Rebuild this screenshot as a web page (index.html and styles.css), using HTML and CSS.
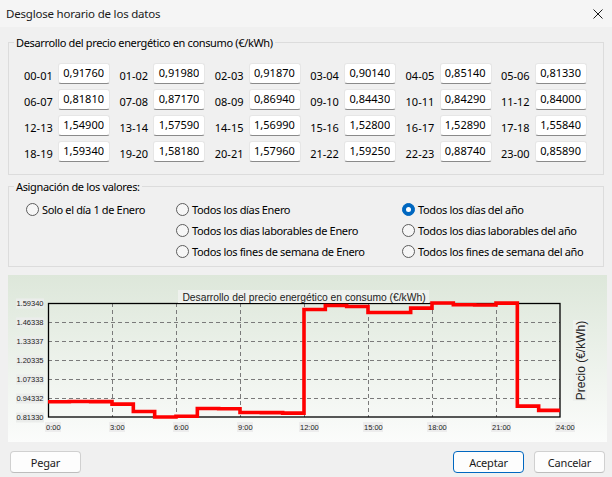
FILE: index.html
```html
<!DOCTYPE html>
<html lang="es">
<head>
    <meta charset="UTF-8">
    <title>Desglose horario de los datos</title>
    <link rel="stylesheet" href="styles.css">
</head>
<body>
    <div class="titlebar">
        <span class="title">Desglose horario de los datos</span>
        <svg class="close" width="10" height="10" viewBox="0 0 10 10">
            <path d="M0.5 0.5 L9.5 9.5 M9.5 0.5 L0.5 9.5" stroke="#1a1a1a" stroke-width="1" fill="none"/>
        </svg>
    </div>

    <div class="content">
        <fieldset class="group">
            <legend>Desarrollo del precio energético en consumo (€/kWh)</legend>
            <div class="price-grid">
                <div class="cell"><span class="hour">00-01</span><input class="val" value="0,91760" readonly></div>
                <div class="cell"><span class="hour">01-02</span><input class="val" value="0,91980" readonly></div>
                <div class="cell"><span class="hour">02-03</span><input class="val" value="0,91870" readonly></div>
                <div class="cell"><span class="hour">03-04</span><input class="val" value="0,90140" readonly></div>
                <div class="cell"><span class="hour">04-05</span><input class="val" value="0,85140" readonly></div>
                <div class="cell"><span class="hour">05-06</span><input class="val" value="0,81330" readonly></div>

                <div class="cell"><span class="hour">06-07</span><input class="val" value="0,81810" readonly></div>
                <div class="cell"><span class="hour">07-08</span><input class="val" value="0,87170" readonly></div>
                <div class="cell"><span class="hour">08-09</span><input class="val" value="0,86940" readonly></div>
                <div class="cell"><span class="hour">09-10</span><input class="val" value="0,84430" readonly></div>
                <div class="cell"><span class="hour">10-11</span><input class="val" value="0,84290" readonly></div>
                <div class="cell"><span class="hour">11-12</span><input class="val" value="0,84000" readonly></div>

                <div class="cell"><span class="hour">12-13</span><input class="val" value="1,54900" readonly></div>
                <div class="cell"><span class="hour">13-14</span><input class="val" value="1,57590" readonly></div>
                <div class="cell"><span class="hour">14-15</span><input class="val" value="1,56990" readonly></div>
                <div class="cell"><span class="hour">15-16</span><input class="val" value="1,52800" readonly></div>
                <div class="cell"><span class="hour">16-17</span><input class="val" value="1,52890" readonly></div>
                <div class="cell"><span class="hour">17-18</span><input class="val" value="1,55840" readonly></div>

                <div class="cell"><span class="hour">18-19</span><input class="val" value="1,59340" readonly></div>
                <div class="cell"><span class="hour">19-20</span><input class="val" value="1,58180" readonly></div>
                <div class="cell"><span class="hour">20-21</span><input class="val" value="1,57960" readonly></div>
                <div class="cell"><span class="hour">21-22</span><input class="val" value="1,59250" readonly></div>
                <div class="cell"><span class="hour">22-23</span><input class="val" value="0,88740" readonly></div>
                <div class="cell"><span class="hour">23-00</span><input class="val" value="0,85890" readonly></div>
            </div>
        </fieldset>

        <fieldset class="group assign">
            <legend>Asignación de los valores:</legend>
            <div class="radio-grid">
                <div class="radio"><span class="dot"></span>Solo el día 1 de Enero</div>
                <div class="radio"><span class="dot"></span>Todos los días Enero</div>
                <div class="radio"><span class="dot on"></span>Todos los días del año</div>
                <div class="blank"></div>
                <div class="radio"><span class="dot"></span>Todos los dias laborables de Enero</div>
                <div class="radio"><span class="dot"></span>Todos los dias laborables del año</div>
                <div class="blank"></div>
                <div class="radio"><span class="dot"></span>Todos los fines de semana de Enero</div>
                <div class="radio"><span class="dot"></span>Todos los fines de semana del año</div>
            </div>
        </fieldset>

        <div class="chart-panel">
            <svg class="chart" width="599" height="167" viewBox="8 275 599 167">
                <!-- grid -->
                <g stroke="#7a7a7a" stroke-width="1" stroke-dasharray="4 3">
                    <path d="M48 322.5 H560 M48 341.5 H560 M48 360.5 H560 M48 379.5 H560 M48 398.5 H560"/>
                    <path d="M112.5 303 V417 M176.5 303 V417 M240.5 303 V417 M304.5 303 V417 M368.5 303 V417 M432.5 303 V417 M496.5 303 V417"/>
                </g>
                <rect x="48.5" y="303.5" width="511.5" height="113.5" fill="none" stroke="#000" stroke-width="1.3"/>

                <!-- title -->
                <rect x="178" y="290" width="251" height="13" fill="#eef1ed"/>
                <text class="ctitle" x="304" y="300.5" text-anchor="middle">Desarrollo del precio energético en consumo (€/kWh)</text>

                <!-- y axis labels -->
                <g class="lblbox" fill="#ebedeb">
                    <rect x="16" y="298.5" width="28" height="10"/>
                    <rect x="16" y="317.5" width="28" height="10"/>
                    <rect x="16" y="336.5" width="28" height="10"/>
                    <rect x="16" y="355.5" width="28" height="10"/>
                    <rect x="16" y="374.5" width="28" height="10"/>
                    <rect x="16" y="393.5" width="28" height="10"/>
                    <rect x="16" y="412.5" width="28" height="10"/>
                </g>
                <g class="ylbl" text-anchor="end">
                    <text x="43.5" y="306.3">1.59340</text>
                    <text x="43.5" y="325.3">1.46338</text>
                    <text x="43.5" y="344.3">1.33337</text>
                    <text x="43.5" y="363.3">1.20335</text>
                    <text x="43.5" y="382.3">1.07333</text>
                    <text x="43.5" y="401.3">0.94332</text>
                    <text x="43.5" y="420.3">0.81330</text>
                </g>

                <!-- x axis labels -->
                <g fill="#ededed">
                    <rect x="45" y="422" width="16" height="10"/>
                    <rect x="109" y="422" width="16" height="10"/>
                    <rect x="173" y="422" width="16" height="10"/>
                    <rect x="237" y="422" width="16" height="10"/>
                    <rect x="299" y="422" width="20" height="10"/>
                    <rect x="363" y="422" width="20" height="10"/>
                    <rect x="427" y="422" width="20" height="10"/>
                    <rect x="491" y="422" width="20" height="10"/>
                    <rect x="555" y="422" width="20" height="10"/>
                </g>
                <g class="xlbl">
                    <text x="46" y="430">0:00</text>
                    <text x="110" y="430">3:00</text>
                    <text x="174" y="430">6:00</text>
                    <text x="238" y="430">9:00</text>
                    <text x="300" y="430">12:00</text>
                    <text x="364" y="430">15:00</text>
                    <text x="428" y="430">18:00</text>
                    <text x="492" y="430">21:00</text>
                    <text x="556" y="430">24:00</text>
                </g>

                <!-- y axis title -->
                <rect x="573" y="320" width="14" height="81" fill="#eef1ee"/>
                <text class="ytitle" transform="translate(584.5 360.5) rotate(-90)" text-anchor="middle">Precio (€/kWh)</text>

                <!-- price steps -->
                <path d="M48 401.76 H69.33 V401.44 H90.67 V401.6 H112 V404.13 H133.33 V411.43 H154.67 V417 H176 V416.3 H197.33 V408.47 H218.67 V408.8 H240 V412.47 H261.33 V412.67 H282.67 V413.1 H304 V309.49 H325.33 V305.56 H346.67 V306.43 H368 V312.56 H389.33 V312.43 H410.67 V308.11 H432 V303 H453.33 V304.7 H474.67 V305.02 H496 V303.13 H517.33 V406.17 H538.67 V410.34 H560"
                      fill="none" stroke="#ff0000" stroke-width="3.6" stroke-linejoin="miter"/>
            </svg>
        </div>

        <div class="buttons">
            <button class="btn">Pegar</button>
            <span class="spacer"></span>
            <button class="btn default">Aceptar</button>
            <button class="btn">Cancelar</button>
        </div>
    </div>
</body>
</html>
```

FILE: styles.css
```css
body {
    margin: 0;
    width: 612px;
    height: 477px;
    overflow: hidden;
    background: #f0f0f0;
    font-family: "Noto Sans", "Open Sans", sans-serif;
    font-size: 11px;
    letter-spacing: -0.35px;
    color: #000;
}
.titlebar {
    height: 27px;
    display: flex;
    align-items: center;
    justify-content: space-between;
    padding: 0 9px 0 6px;
    background: #f5f5f5;
}
.title {
    font-size: 11.5px;
    letter-spacing: -0.2px;
    color: #1a1a1a;
}
.content {
    padding: 0 8px;
}
.group {
    margin: 8px 0 0;
    padding: 0 0 0 5px;
    border: 1px solid #dcdcdc;
    min-width: 0;
}
.group legend {
    padding: 0 2px;
    line-height: 15px;
}
.price-grid {
    display: grid;
    grid-template-columns: repeat(6, 86px);
    grid-auto-rows: 21px;
    column-gap: 9.4px;
    row-gap: 5px;
    padding: 13px 0 12px 10px;
}
.cell {
    display: flex;
    align-items: center;
}
.hour {
    width: 34px;
    padding-top: 3px;
    letter-spacing: 0;
}
.val {
    box-sizing: border-box;
    width: 52px;
    height: 21px;
    margin: 0;
    padding: 0 5px 2px 0;
    border: 1px solid #e6e6e6;
    border-bottom-color: #8a8a8a;
    border-radius: 3px;
    background: #fff;
    font-family: inherit;
    font-size: 11px;
    letter-spacing: 0;
    text-align: right;
    color: #000;
    outline: none;
}
.assign {
    margin-top: 4px;
}
.radio-grid {
    display: grid;
    grid-template-columns: 150px 226px 1fr;
    grid-auto-rows: 21px;
    padding: 5px 0 4px 12px;
}
.radio {
    display: flex;
    align-items: center;
}
.dot {
    box-sizing: border-box;
    width: 13px;
    height: 13px;
    margin-right: 3px;
    border: 1px solid #5c5c5c;
    border-radius: 50%;
    background: #f6f6f6;
    display: inline-flex;
    align-items: center;
    justify-content: center;
}
.dot.on {
    background: #0067c0;
    border-color: #0067c0;
}
.dot.on::after {
    content: "";
    width: 5px;
    height: 5px;
    border-radius: 50%;
    background: #fff;
}
.chart-panel {
    margin: 8px -3px 0 0;
    height: 167px;
    background: linear-gradient(#dde7da, #fbfcfb);
}
.chart {
    display: block;
}
.chart text {
    font-family: "Liberation Sans", Arial, sans-serif;
    fill: #222;
    letter-spacing: 0;
}
.ctitle {
    font-size: 10.3px;
}
.ylbl text, .xlbl text {
    font-size: 7.5px;
}
.ytitle {
    font-size: 12px;
}
.buttons {
    display: flex;
    gap: 10px;
    margin: 9px -1px 0 0;
    padding-left: 2px;
}
.spacer {
    flex: 1;
}
.btn {
    box-sizing: border-box;
    width: 71px;
    height: 22px;
    padding: 0;
    border: 1px solid #d0d0d0;
    border-bottom-color: #bdbdbd;
    border-radius: 4px;
    background: #fdfdfd;
    font-family: inherit;
    font-size: 11px;
    letter-spacing: -0.2px;
    color: #1a1a1a;
}
.btn.default {
    border-color: #0067c0;
}
```
